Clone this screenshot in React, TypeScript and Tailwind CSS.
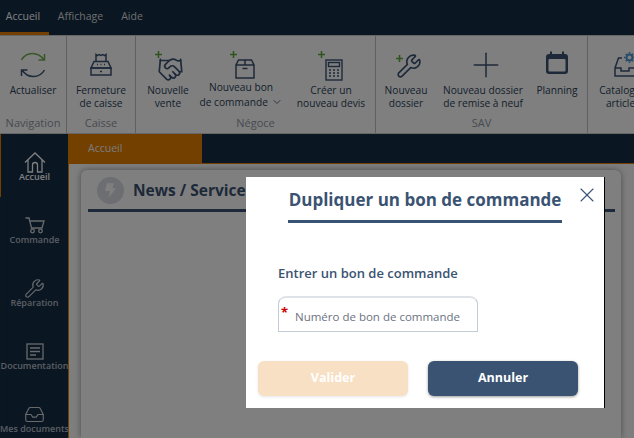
import { ChevronDown, Handshake, Inbox, Plus, Wrench, X } from "lucide-react";
import type { ReactNode } from "react";

const font = { fontFamily: '"Open Sans", sans-serif' };

const GreenPlus = ({ className }: { className: string }) => (
  <svg viewBox="0 0 9 9" className={`absolute h-[9px] w-[9px] ${className}`} fill="none" stroke="#5fa83a" strokeWidth="1.6">
    <path d="M4.500 1v7M1 4.500h7" />
  </svg>
);

const RefreshIcon = () => (
  <svg viewBox="0 0 26 26" className="h-[26px] w-[26px]" fill="none" strokeWidth="1.5">
    <path d="M1.500 8C4 3.500 8 1.500 12.500 1.500S21 3.500 24 8M24.500 2V8H18.500" stroke="#6fae4d" />
    <path d="M24.500 18C22 22.500 18 24.500 13.500 24.500S5 22.500 2 18M1.500 24V18H7.500" stroke="#3a5372" />
  </svg>
);

const CashIcon = () => (
  <svg viewBox="0 0 24 24" className="h-6 w-6" fill="none" stroke="#3a5372" strokeWidth="1.5">
    <path d="M7 8V1.500l1.500 1 1.500-1 2 1 2-1 1.500 1 1.500-1V8" />
    <path d="M2 15l3-6.500h14l3 6.500z" />
    <path d="M2 15h20v7H2zM11 18.500h2M8 11.500h1M11.500 11.500h1M15 11.500h1" />
  </svg>
);

const BoxIcon = () => (
  <svg viewBox="0 0 20 20" className="h-5 w-5" fill="none" stroke="#3a5372" strokeWidth="1.5">
    <path d="M3.500 1h13L19 6v13H1V6zM1 6h18M10 1v5M7.500 9.500h5" />
  </svg>
);

const CalculatorIcon = () => (
  <svg viewBox="0 0 18 22" className="h-[22px] w-[18px]" fill="none" stroke="#3a5372" strokeWidth="1.4">
    <rect x="1" y="1" width="16" height="20" />
    <rect x="3.500" y="3.500" width="11" height="4" />
    <path d="M4 11h2M8 11h2M12 11h2M4 14h2M8 14h2M12 14h2M4 17h2M8 17h2M12 17h2" strokeWidth="1.600" />
  </svg>
);

const CalendarIcon = () => (
  <svg viewBox="0 0 24 24" className="h-6 w-6" fill="none">
    <path d="M6 0.500v4M18 0.500v4" stroke="#3a5372" strokeWidth="2" />
    <rect x="1" y="3" width="22" height="20" rx="3" fill="#3a5372" />
    <rect x="3.500" y="8" width="17" height="12.500" rx="1" fill="#ffffff" />
  </svg>
);

const CatalogIcon = () => (
  <svg viewBox="0 0 26 26" className="h-[26px] w-[26px]" fill="none" stroke="#3a5372" strokeWidth="1.5">
    <path d="M8 6H4.500L1 16v8h20v-8M1 16h6v3h8v-3h6" />
    <circle cx="15.500" cy="5.500" r="3" stroke="#4f95d0" strokeWidth="2" />
    <path d="M15.500 0v1.500M15.500 9.500V11M10 5.500h1.500M19.500 5.500H21M11.700 1.700l1 1M18.300 8.300l1 1M11.700 9.300l1-1M18.300 2.700l1-1" stroke="#4f95d0" />
  </svg>
);

const HomeIcon = () => (
  <svg viewBox="0 0 22 21" className="h-[21px] w-[22px]" fill="none" stroke="#ffffff" strokeWidth="1.300">
    <path d="M1 10.500L11 1l10 9.500M4 8v12h4.500v-7a2.500 2.500 0 0 1 5 0v7H18V8" />
  </svg>
);

const CartIcon = () => (
  <svg viewBox="0 0 20 17" className="h-[17px] w-5" fill="none" stroke="#d0d4d9" strokeWidth="1.300">
    <path d="M0.500 1H4l2.500 10h10.500L19 4H4.700" />
    <circle cx="7.500" cy="14" r="1.800" />
    <circle cx="15.500" cy="14" r="1.800" />
  </svg>
);

const DocIcon = () => (
  <svg viewBox="0 0 18 17" className="h-[17px] w-[18px]" fill="none" stroke="#d0d4d9" strokeWidth="1.300">
    <rect x="1" y="1" width="16" height="15" />
    <path d="M4 5h10M4 8.500h10M4 12h6" />
  </svg>
);

const Bolt = () => (
  <svg viewBox="0 0 12 16" className="h-[15px] w-[11px]" fill="#ffffff">
    <path d="M2 0h8L8 5.500h4L4 16l1.500-7.500H0z" />
  </svg>
);

const RibbonItem = ({ icon, label, className = "" }: { icon: ReactNode; label: ReactNode; className?: string }) => (
  <div className={`flex shrink-0 flex-col items-center text-center ${className}`}>
    <div className="relative flex h-[34px] w-full items-center justify-center">{icon}</div>
    <div className="mt-[2px] text-[10.2px] leading-[13px] whitespace-nowrap text-[#2a3f59]">{label}</div>
  </div>
);

const RibbonGroup = ({ title, width, children }: { title: string; width: string; children: ReactNode }) => (
  <div className={`flex h-full shrink-0 flex-col border-r border-[#c0c0c0] ${width}`}>
    <div className="flex flex-1 pt-[12px]">{children}</div>
    <div className="pb-[2px] text-center text-[11px] leading-[16px] text-[#8c96a2]">{title}</div>
  </div>
);

const SideItem = ({ icon, label, active }: { icon: ReactNode; label: string; active?: boolean }) => (
  <div className={`flex h-[63px] flex-col items-center pt-[18px] ${active ? "border-l border-[#e88000]" : "border-l border-[#1c2e42]"}`}>
    <div className="flex h-[20px] items-center justify-center">{icon}</div>
    <span className={`-mt-[2px] text-[9px] leading-[13px] font-semibold whitespace-nowrap ${active ? "text-white" : "text-[#b5bcc4]"}`}>
      {label}
    </span>
  </div>
);

export default function App() {
  return (
    <div className="relative h-[438px] w-[634px] overflow-hidden bg-white" style={font}>
      <div className="flex h-[35px] items-end bg-[#142c44] text-[10.5px] text-white">
        <div className="flex h-[35px] w-[49px] items-center justify-center border-b-[3px] border-[#e88000] pt-[1px] pr-[3px]">Accueil</div>
        <div className="flex h-[35px] w-[63px] items-center justify-center pb-[2px] text-[#dddddd]">Affichage</div>
        <div className="flex h-[35px] w-[40px] items-center justify-center pb-[2px] text-[#dddddd]">Aide</div>
      </div>

      <div className="flex h-[99px] overflow-hidden border-y border-[#cccccc] bg-white">
        <RibbonGroup title="Navigation" width="w-[67px]">
          <RibbonItem className="w-full" icon={<RefreshIcon />} label="Actualiser" />
        </RibbonGroup>
        <RibbonGroup title="Caisse" width="w-[69px]">
          <RibbonItem className="w-full" icon={<CashIcon />} label={<>Fermeture<br />de caisse</>} />
        </RibbonGroup>
        <RibbonGroup title="Négoce" width="w-[240px]">
          <RibbonItem
            className="w-[64px]"
            icon={
              <>
                <GreenPlus className="top-[2px] left-[18px]" />
                <Handshake className="mt-[8px] ml-[4px]" size={27} color="#3a5372" strokeWidth={1.5} />
              </>
            }
            label={<>Nouvelle<br />vente</>}
          />
          <RibbonItem
            className="w-[82px]"
            icon={
              <>
                <GreenPlus className="top-[2px] left-[29px]" />
                <div className="mt-[7px] ml-[8px]"><BoxIcon /></div>
              </>
            }
            label={
              <div className="-mt-[4px] leading-[15px]">
                Nouveau bon
                <br />
                de commande <ChevronDown className="inline-block align-[-2px]" size={12} strokeWidth={1.5} />
              </div>
            }
          />
          <RibbonItem
            className="ml-[14px] w-[70px]"
            icon={
              <>
                <GreenPlus className="top-[2px] left-[21px]" />
                <div className="mt-[9px] ml-[5px]"><CalculatorIcon /></div>
              </>
            }
            label={<>Créer un<br />nouveau devis</>}
          />
        </RibbonGroup>
        <RibbonGroup title="SAV" width="w-[212px]">
          <RibbonItem
            className="w-[60px]"
            icon={
              <>
                <GreenPlus className="top-[6px] left-[19px]" />
                <Wrench className="mt-[2px] ml-[6px]" size={26} color="#3a5372" strokeWidth={1.5} />
              </>
            }
            label={<>Nouveau<br />dossier</>}
          />
          <RibbonItem
            className="w-[94px]"
            icon={<Plus className="ml-[5px]" size={40} color="#3a5372" strokeWidth={0.9} />}
            label={<>Nouveau dossier<br />de remise à neuf</>}
          />
          <RibbonItem className="w-[54px]" icon={<div className="-mt-[4px]"><CalendarIcon /></div>} label="Planning" />
        </RibbonGroup>
        <RibbonGroup title="" width="w-[80px]">
          <RibbonItem className="ml-[6px] w-[58px]" icon={<div className="ml-[8px]"><CatalogIcon /></div>} label={<>Catalogue<br />articles</>} />
        </RibbonGroup>
      </div>

      <div className="flex h-[304px]">
        <div className="h-full w-[69px] shrink-0 border-r border-[#e88000] bg-[#142c44]">
          <SideItem active icon={<HomeIcon />} label="Accueil" />
          <SideItem icon={<CartIcon />} label="Commande" />
          <SideItem icon={<Wrench size={21} color="#d0d4d9" strokeWidth={1.3} />} label="Réparation" />
          <SideItem icon={<DocIcon />} label="Documentation" />
          <SideItem icon={<Inbox size={21} color="#d0d4d9" strokeWidth={1.3} />} label="Mes documents" />
        </div>
        <div className="flex min-w-0 flex-1 flex-col">
          <div className="flex h-[30px] shrink-0 bg-[#142c44]">
            <div className="flex w-[133px] items-center border-b border-[#e88000] bg-[#e88000] pt-[1px] pl-[19px] text-[10.5px] text-[#f5f5f5]">Accueil</div>
            <div className="flex-1 border-b border-[#e88000]" />
          </div>
          <div className="flex-1 bg-[#fcfcfc] px-[12px] pt-[6px]">
            <div className="h-full w-[540px] rounded-t-[6px] bg-[#ffffff] px-[7px] pt-[7px] shadow-[0_0_6px_rgba(0,0,0,0.4)]">
              <div className="flex h-[35px] w-[527px] items-center gap-[9px] border-b-[3px] border-[#3a5372] pb-[5px] pl-[9px]">
                <div className="flex h-[27px] w-[27px] items-center justify-center rounded-full bg-[#d8dde3]"><Bolt /></div>
                <span className="mt-[1px] text-[15.500px] font-bold text-[#3a5372]">News / Services</span>
              </div>
              <div className="mt-[12px] h-[200px] bg-[#ffffff]" />
            </div>
          </div>
        </div>
      </div>

      <div className="absolute inset-0 bg-black/50" />

      <div className="absolute top-[177px] left-[246px] h-[231px] w-[359px] border-r border-black bg-white">
        <div className="ml-[42px] flex w-[274px] flex-col">
          <div className="h-[46px] border-b-[3px] border-[#3a5372] pt-[10px] text-center text-[17px] leading-[25px] font-bold whitespace-nowrap text-[#3a5372]">
            Dupliquer un bon de commande
          </div>
        </div>
        <X className="absolute top-[6px] right-[5px]" size={24} color="#3a5372" strokeWidth={1.1} />
        <div className="mt-[41px] pl-[32px] text-[13px] leading-[18px] font-semibold text-[#3a5372]">Entrer un bon de commande</div>
        <div className="relative mt-[14px] ml-[32px] flex h-[36px] w-[200px] items-center rounded-t-[8px] border border-t-2 border-[#c3ccd6] border-t-[#dfe3e8] pt-[5px] pl-[16px] text-[11.500px] text-[#6b7280]">
          <span className="absolute top-[8px] left-[2px] text-[13px] leading-[13px] font-bold text-[#cc0000]">*</span>
          Numéro de bon de commande
        </div>
        <div className="mt-[29px] flex gap-[20px] pl-[12px]">
          <div className="flex h-[35px] w-[150px] items-center justify-center rounded-[6px] bg-[#f8e0c4] text-[12.500px] font-bold text-white shadow-[0_1px_3px_rgba(0,0,0,0.1)]">Valider</div>
          <div className="flex h-[35px] w-[150px] items-center justify-center rounded-[6px] bg-[#3a5372] text-[12.500px] font-bold text-white shadow-[0_1px_3px_rgba(0,0,0,0.4)]">Annuler</div>
        </div>
      </div>
    </div>
  );
}
